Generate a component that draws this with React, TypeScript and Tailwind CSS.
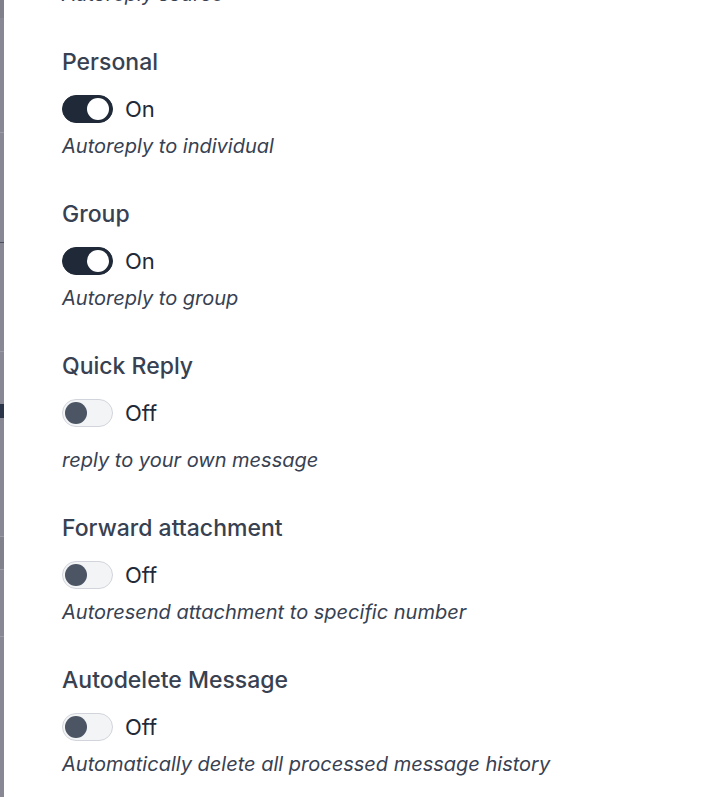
import React, { useState } from 'react';

type Setting = {
  id: string;
  title: string;
  description: string;
  on: boolean;
  descClass?: string;
};

const initial: Setting[] = [
  { id: 'personal', title: 'Personal', description: 'Autoreply to individual', on: true },
  { id: 'group', title: 'Group', description: 'Autoreply to group', on: true },
  { id: 'quick', title: 'Quick Reply', description: 'reply to your own message', on: false, descClass: 'mt-[19px]' },
  { id: 'forward', title: 'Forward attachment', description: 'Autoresend attachment to specific number', on: false },
  { id: 'autodelete', title: 'Autodelete Message', description: 'Automatically delete all processed message history', on: false },
];

const Toggle = ({ on, onClick }: { on: boolean; onClick: () => void }) => (
  <button
    type="button"
    onClick={onClick}
    className={`relative h-7 w-[51px] rounded-full border transition-colors ${
      on ? 'bg-[#1f2937] border-[#1f2937]' : 'bg-[#f3f4f6] border-[#d1d5db]'
    }`}
  >
    <span
      className={`absolute top-[2px] h-[22px] w-[22px] rounded-full transition-all ${
        on ? 'left-[24px] bg-white' : 'left-[2px] bg-[#4b5563]'
      }`}
    />
  </button>
);

const Backdrop = () => (
  <div className="w-1 shrink-0 flex flex-col bg-[#878893]">
    <div className="h-[18px] bg-[#7f808a]" />
    <div className="h-[114px]" />
    <div className="h-px bg-[#9a9ba4]" />
    <div className="h-[109px]" />
    <div className="h-px bg-[#4b5060]" />
    <div className="h-[108px]" />
    <div className="h-px bg-[#9a9ba4]" />
    <div className="h-[52px]" />
    <div className="h-[14px] bg-[#2b3448]" />
    <div className="h-[118px]" />
    <div className="h-px bg-[#9a9ba4]" />
    <div className="h-[32px] bg-[#80818b]" />
    <div className="h-px bg-[#9a9ba4]" />
    <div className="h-[66px]" />
    <div className="h-px bg-[#9a9ba4]" />
  </div>
);

export default function App() {
  const [settings, setSettings] = useState(initial);

  const toggle = (id: string) =>
    setSettings(prev => prev.map(s => (s.id === id ? { ...s, on: !s.on } : s)));

  return (
    <div className="flex h-[797px] w-[712px] overflow-hidden bg-white font-['Inter','Liberation_Sans',sans-serif]">
      <Backdrop />
      <div className="flex-1 bg-white overflow-hidden">
        <div className="pl-[58px] pr-6 -mt-5 flex flex-col gap-10">
          <p className="text-[20px] leading-7 italic text-[#374151]">Autoreply source</p>
          {settings.map(s => (
            <div key={s.id} className="flex flex-col">
              <h3 className="text-[23px] leading-7 font-medium text-[#374151]">{s.title}</h3>
              <div className="mt-[19px] flex items-center gap-3">
                <Toggle on={s.on} onClick={() => toggle(s.id)} />
                <span className="text-[22px] leading-7 text-[#1f2937]">{s.on ? 'On' : 'Off'}</span>
              </div>
              <p className={`${s.descClass ?? 'mt-[9px]'} text-[20px] leading-7 italic text-[#374151]`}>
                {s.description}
              </p>
            </div>
          ))}
        </div>
      </div>
    </div>
  );
}
